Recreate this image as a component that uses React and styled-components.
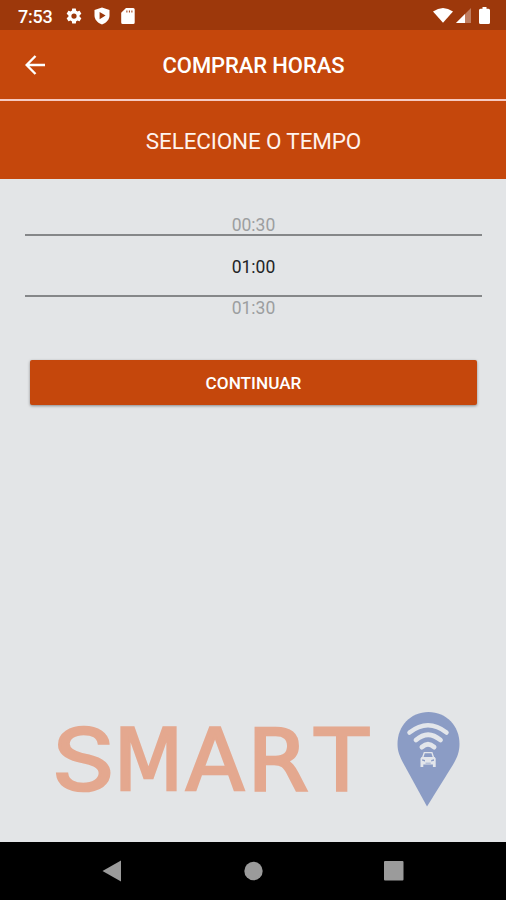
import React, { useState } from "react";
import styled, { createGlobalStyle } from "styled-components";

const GlobalStyle = createGlobalStyle`
	* {
		box-sizing: border-box;
	}
	body {
		margin: 0;
		font-family: Roboto, "Liberation Sans", sans-serif;
	}
`;

const Screen = styled.div`
	display: flex;
	flex-direction: column;
	width: 506px;
	height: 900px;
	overflow: hidden;
	background-color: #e3e5e7;
`;

const StatusBar = styled.div`
	display: flex;
	justify-content: space-between;
	height: 30px;
	padding: 0 16px 0 18px;
	background-color: #9d380b;
	color: white;

	svg {
		display: block;
	}
`;

const StatusGroup = styled.div`
	display: flex;
	align-items: center;
	gap: ${(props) => props.$gap}px;
	padding-top: ${(props) => props.$top}px;
`;

const Clock = styled.span`
	width: 36px;
	font-size: 18px;
	font-weight: 500;
	letter-spacing: -0.2px;
`;

const Battery = styled.svg`
	margin-left: 5px;
`;

const Toolbar = styled.header`
	display: grid;
	grid-template-columns: 70px 1fr 70px;
	align-items: center;
	height: 71px;
	border-bottom: 2px solid #f6c9c2;
	background-color: #c5470c;
	color: white;
`;

const BackButton = styled.button`
	display: flex;
	justify-content: center;
	padding: 0;
	border: none;
	background: none;
	color: white;
	cursor: pointer;
`;

const Title = styled.h1`
	margin: 2px 0 0 1px;
	text-align: center;
	font-size: 22px;
	font-weight: 500;
	letter-spacing: -0.1px;
	white-space: nowrap;
`;

const Subtitle = styled.h2`
	display: flex;
	align-items: center;
	justify-content: center;
	height: 78px;
	margin: 0;
	padding: 2px 0 0 1px;
	background-color: #c5470c;
	color: #fff3ee;
	font-size: 22.5px;
	font-weight: 400;
	letter-spacing: -0.15px;
`;

const Main = styled.main`
	display: flex;
	flex: 1;
	flex-direction: column;
	padding: 35px 24px 0 25px;
`;

const Picker = styled.div`
	display: flex;
	flex-direction: column;
`;

const Option = styled.div`
	display: flex;
	align-items: center;
	justify-content: center;
	height: ${(props) => (props.$selected ? 63 : 20)}px;
	padding-top: ${(props) => (props.$selected ? 3 : 2.5)}px;
	border: solid #858789;
	border-width: ${(props) => (props.$selected ? "2px 0" : "0")};
	color: ${(props) => (props.$selected ? "#222426" : "#9c9ea0")};
	font-size: 17.5px;
	cursor: pointer;
`;

const Button = styled.button`
	height: 45px;
	margin: 43px 5px 0;
	padding-bottom: 1px;
	border: none;
	border-radius: 2px;
	background-color: #c5470c;
	box-shadow: 0 1px 3px rgba(0, 0, 0, 0.4);
	color: white;
	font-family: inherit;
	font-size: 17.2px;
	font-weight: 500;
	cursor: pointer;
`;

const Brand = styled.div`
	display: flex;
	justify-content: space-between;
	margin: auto 22px 35px 30px;
`;

const Wordmark = styled.svg`
	margin-top: 3px;
	overflow: visible;
	fill: #e4a88f;
	stroke: #e4a88f;
	stroke-width: 2.6px;
	font-size: 85px;
`;

const Letter = styled.text`
	font-family: ${(props) => props.$font}, sans-serif;
`;

const NavBar = styled.nav`
	display: flex;
	align-items: center;
	justify-content: space-between;
	height: 58px;
	padding: 0 102px;
	background-color: black;
	fill: #9b9b9b;
`;

const times = ["00:30", "01:00", "01:30"];

const letters = [
	{ char: "S", x: 52, width: 62.5, font: "Inter" },
	{ char: "M", x: 113.8, width: 69.5, font: "DejaVu Sans" },
	{ char: "A", x: 185.8, width: 58.6, font: "DejaVu Sans" },
	{ char: "R", x: 247.2, width: 61.5, font: "DejaVu Sans" },
	{ char: "T", x: 315, width: 53.3, font: "DejaVu Sans" },
];

function GearIcon() {
	return (
		<svg width="18" height="18" viewBox="0 0 24 24" fill="currentColor">
			<path d="M19.43 12.98c.04-.32.07-.64.07-.98s-.03-.66-.07-.98l2.11-1.65c.19-.15.24-.42.12-.64l-2-3.46c-.12-.22-.39-.3-.61-.22l-2.49 1c-.52-.4-1.08-.73-1.69-.98l-.38-2.65A.49.49 0 0 0 14 2h-4c-.25 0-.46.18-.49.42l-.38 2.65c-.61.25-1.17.59-1.69.98l-2.49-1c-.23-.09-.49 0-.61.22l-2 3.46c-.13.22-.07.49.12.64l2.11 1.65c-.04.32-.07.65-.07.98s.03.66.07.98l-2.11 1.65c-.19.15-.24.42-.12.64l2 3.46c.12.22.39.3.61.22l2.49-1c.52.4 1.08.73 1.69.98l.38 2.65c.03.24.24.42.49.42h4c.25 0 .46-.18.49-.42l.38-2.65c.61-.25 1.17-.59 1.69-.98l2.49 1c.23.09.49 0 .61-.22l2-3.46c.12-.22.07-.49-.12-.64zM12 15.5a3.5 3.5 0 1 1 0-7 3.5 3.5 0 0 1 0 7z" />
		</svg>
	);
}

function ShieldIcon() {
	return (
		<svg width="16" height="18" viewBox="0 0 16 18" fill="currentColor">
			<path
				fillRule="evenodd"
				d="M8 .5 15.500 3v5.500c0 4-3 7.200-7.500 9C3.500 15.700.5 12.500.5 8.500V3zM5.600 5v7.200L11.600 8.600z"
			/>
		</svg>
	);
}

function CardIcon() {
	return (
		<svg width="14" height="16" viewBox="0 0 14 16" fill="currentColor">
			<path
				fillRule="evenodd"
				d="M5 0h7.200q1.500 0 1.500 1.500v13q0 1.500-1.500 1.500H1.700Q.2 16 .2 14.500V4.800zM5.400 2.400v2h1V2.400zM7.900 2.400v2h1V2.400zM10.400 2.400v2h1V2.400z"
			/>
		</svg>
	);
}

function WifiIcon() {
	return (
		<svg width="20" height="15" viewBox="0 0 20 15" fill="currentColor">
			<path d="M0 3.600Q10-3.400 20 3.600L10 14.800z" />
		</svg>
	);
}

function SignalIcon() {
	return (
		<svg width="15" height="15" viewBox="0 0 15 15" fill="currentColor">
			<path d="M0 15 15 0v15z" opacity="0.35" />
			<path d="M0 15 9 6V15z" />
		</svg>
	);
}

function BatteryIcon() {
	return (
		<Battery width="11" height="17" viewBox="0 0 11 17" fill="currentColor">
			<path d="M3.500 0h4v1.700h2q1.500 0 1.500 1.500v12.300q0 1.500-1.500 1.500h-8Q0 17 0 15.500V3.200q0-1.500 1.500-1.500h2z" />
		</Battery>
	);
}

// location pin with the wifi waves over the car
function Pin() {
	return (
		<svg width="63" height="95" viewBox="0 0 63 95">
			<path
				fill="#8b9cc5"
				d="M31.500 0C13.500 0 .5 14 .5 32c0 8 2.500 13 6.500 20.500L30 94.500 55.500 53.500C60 46 62.500 40 62.500 32c0-18-13-32-31-32z"
			/>
			<g fill="none" stroke="#e3e6eb" strokeLinecap="round">
				<path d="M12.500 20.500Q31 6 49.500 20.500" strokeWidth="4.500" />
				<path d="M19 28Q31 17.300 43.500 28" strokeWidth="4.800" />
				<path d="M25 35Q31 29.500 37 35" strokeWidth="5" />
				<path d="M25.500 46l1.800-5.400h7.600l1.800 5.400" strokeWidth="1.400" strokeLinecap="butt" />
			</g>
			<path
				fill="#e3e6eb"
				fillRule="evenodd"
				d="M24.500 45h13.200l1 1.500v8.500h-2.800v-2.500h-9.600V55h-2.800v-8.500zM25.200 47.200v1.500l2.800.8v-1.500zM37 47.200v1.500l-2.800.8v-1.500zM28.500 50.800v.8h5.200v-.8z"
			/>
		</svg>
	);
}

function Logo() {
	return (
		<Brand>
			<Wordmark width="315" height="92" viewBox="55 0 315 92">
				{letters.map((letter) => (
					<Letter
						key={letter.char}
						$font={letter.font}
						x={letter.x}
						y="75.300"
						textLength={letter.width}
						lengthAdjust="spacingAndGlyphs"
					>
						{letter.char}
					</Letter>
				))}
			</Wordmark>
			<Pin />
		</Brand>
	);
}

function App() {
	const [selected, setSelected] = useState("01:00");

	return (
		<Screen>
			<GlobalStyle />
			<StatusBar>
				<StatusGroup $gap={11} $top={2}>
					<Clock>7:53</Clock>
					<GearIcon />
					<ShieldIcon />
					<CardIcon />
				</StatusGroup>
				<StatusGroup $gap={3} $top={1}>
					<WifiIcon />
					<SignalIcon />
					<BatteryIcon />
				</StatusGroup>
			</StatusBar>
			<Toolbar>
				<BackButton aria-label="Voltar">
					<svg width="20" height="20" viewBox="0 0 20 20" fill="none" stroke="currentColor" strokeWidth="2.400">
						<path d="M20 10H1.800M10.500 1 1.600 10l8.900 9" />
					</svg>
				</BackButton>
				<Title>COMPRAR HORAS</Title>
			</Toolbar>
			<Subtitle>SELECIONE O TEMPO</Subtitle>
			<Main>
				<Picker>
					{times.map((time) => (
						<Option key={time} $selected={time === selected} onClick={() => setSelected(time)}>
							{time}
						</Option>
					))}
				</Picker>
				<Button>CONTINUAR</Button>
				<Logo />
			</Main>
			<NavBar>
				<svg width="20" height="22" viewBox="0 0 20 22">
					<path d="M.5 11 19 .5v21z" />
				</svg>
				<svg width="20" height="20" viewBox="0 0 20 20">
					<circle cx="10.500" cy="10" r="9.200" />
				</svg>
				<svg width="20" height="20" viewBox="0 0 20 20">
					<rect width="19.500" height="19.500" rx="1" />
				</svg>
			</NavBar>
		</Screen>
	);
}

export default App;
